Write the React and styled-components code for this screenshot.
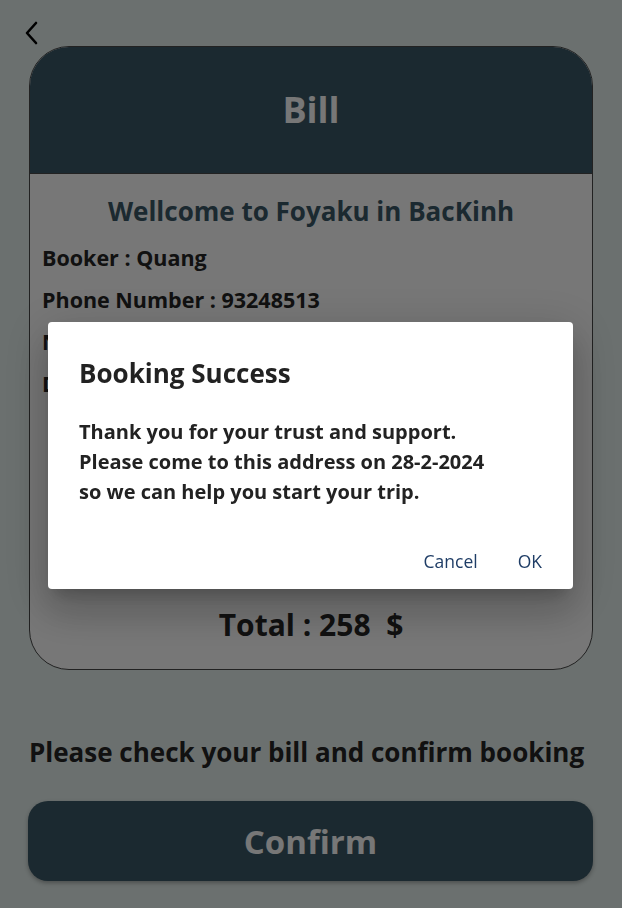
import styled, { createGlobalStyle } from 'styled-components';

const GlobalStyle = createGlobalStyle`
	* { box-sizing: border-box; }
	html, body { margin: 0; padding: 0; }
	body {
		font-family: "Open Sans", "Noto Sans", sans-serif;
		background: #d6e0de;
	}
`

const bill = [
	'Booker : Quang',
	'Phone Number : 93248513',
	'Number of people : 2',
	'Date : 28-2-2024',
]

const App = () => {
	return (
		<>
			<GlobalStyle />
			<Page>
				<BackButton aria-label="back">
					<svg width="14" height="24" viewBox="0 0 14 24" fill="none">
						<path d="M12 2 L3 12 L12 22" stroke="#000" strokeWidth="2.6" strokeLinecap="round" strokeLinejoin="round" />
					</svg>
				</BackButton>

				<Card>
					<CardHeader>Bill</CardHeader>
					<CardBody>
						<Welcome>Wellcome to Foyaku in BacKinh</Welcome>
						{bill.map((line) => (
							<Line key={line}>{line}</Line>
						))}
						<Total>Total : 258&nbsp; $</Total>
					</CardBody>
				</Card>

				<Hint>Please check your bill and confirm booking</Hint>
				<ConfirmButton>Confirm</ConfirmButton>
			</Page>

			<Overlay>
				<Dialog>
					<DialogTitle>Booking Success</DialogTitle>
					<DialogText>
						Thank you for your trust and support.<br />
						Please come to this address on 28-2-2024<br />
						so we can help you start your trip.
					</DialogText>
					<DialogActions>
						<TextButton>Cancel</TextButton>
						<TextButton>OK</TextButton>
					</DialogActions>
				</Dialog>
			</Overlay>
		</>
	)
}

export default App;

const Page = styled.div`
	width: 622px;
	min-height: 908px;
	padding: 20px 29px 0 28px;
	display: flex;
	flex-direction: column;
`

const BackButton = styled.button`
	border: none;
	background: none;
	padding: 0;
	margin-left: -4px;
	width: 16px;
	height: 26px;
	display: flex;
	align-items: center;
	cursor: pointer;
`

const Card = styled.div`
	margin-left: 1px;
	width: 564px;
	height: 624px;
	border: 1px solid #444;
	border-radius: 40px;
	overflow: hidden;
	background: #eeeeee;
	display: flex;
	flex-direction: column;
`

const CardHeader = styled.div`
	height: 126px;
	background: #365260;
	color: #eeeeee;
	font-size: 36px;
	font-weight: 700;
	display: flex;
	align-items: center;
	justify-content: center;
	padding-bottom: 2px;
`

const CardBody = styled.div`
	flex: 1;
	display: flex;
	flex-direction: column;
	padding: 19px 12px 0;
	border-top: 1px solid #444;
`

const Welcome = styled.h2`
	margin: 0 0 14px;
	text-align: center;
	font-size: 26px;
	font-weight: 700;
	color: #365260;
`

const Line = styled.p`
	margin: 0;
	height: 42px;
	font-size: 21.5px;
	font-weight: 700;
	color: #222;
`

const Total = styled.div`
	margin-top: auto;
	margin-bottom: 24px;
	text-align: center;
	font-size: 30px;
	font-weight: 700;
	color: #222;
`

const Hint = styled.p`
	margin: 64px 0 0 1px;
	font-size: 26px;
	font-weight: 700;
	color: #222;
`

const ConfirmButton = styled.button`
	margin-top: 31px;
	width: 565px;
	height: 80px;
	border: none;
	border-radius: 20px;
	background: #365260;
	color: #eeeeee;
	font-family: "Open Sans", "Noto Sans", sans-serif;
	font-size: 33px;
	font-weight: 700;
	box-shadow: 0 2px 4px rgba(0, 0, 0, 0.3);
`

const Overlay = styled.div`
	position: fixed;
	inset: 0;
	background: rgba(0, 0, 0, 0.5);
	display: flex;
	justify-content: center;
	align-items: flex-start;
	padding-top: 322px;
`

const Dialog = styled.div`
	margin-left: -1px;
	width: 525px;
	height: 267px;
	background: #fff;
	border-radius: 4px;
	padding: 33px 31px 0 31px;
	display: flex;
	flex-direction: column;
	box-shadow: 0 11px 15px -7px rgba(0, 0, 0, 0.2), 0 24px 38px 3px rgba(0, 0, 0, 0.14), 0 9px 46px 8px rgba(0, 0, 0, 0.12);
`

const DialogTitle = styled.h3`
	margin: 0;
	font-size: 26px;
	font-weight: 700;
	color: #222;
`

const DialogText = styled.p`
	margin: 26px 0 0;
	font-size: 20px;
	line-height: 30px;
	font-weight: 700;
	color: #222;
`

const DialogActions = styled.div`
	margin-top: auto;
	margin-bottom: 12px;
	display: flex;
	justify-content: flex-end;
	gap: 24px;
	margin-right: -8px;
`

const TextButton = styled.button`
	border: none;
	background: none;
	padding: 4px 8px;
	font-family: "Open Sans", "Noto Sans", sans-serif;
	font-size: 17.5px;
	color: #1f3d66;
	cursor: pointer;
`
